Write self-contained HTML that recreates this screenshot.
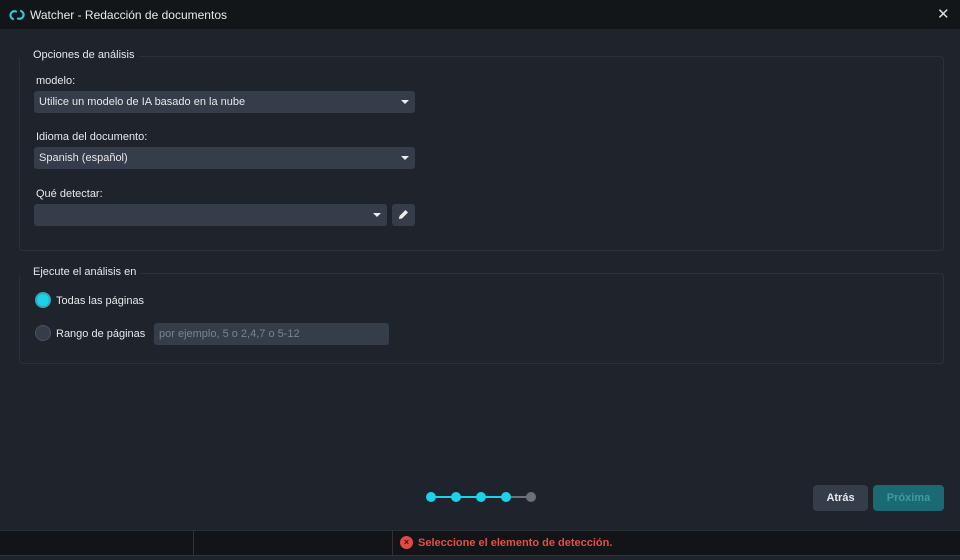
<!DOCTYPE html>
<html><head><meta charset="utf-8"><style>
*{box-sizing:border-box;margin:0;padding:0}
body{width:960px;height:560px;background:#1f232c;font-family:"Liberation Sans",sans-serif;font-size:11px;color:#e6e8ea;position:relative;overflow:hidden}
.abs{position:absolute}
.title{left:0;top:0;width:960px;height:29px;background:#131619}
.grp{border:1px solid #2b313b;border-radius:4px}
.leg{background:#1f232c;padding:0 4px 0 13px;font-size:11px}
.sel{background:#353d4a;border-radius:3px;height:22px;padding:5px 5px;font-size:11px}
.caret{position:absolute;right:6px;top:9px;border-left:4px solid transparent;border-right:4px solid transparent;border-top:4px solid #eee}
.lbl{font-size:11px}
.dot{width:10px;height:10px;border-radius:50%;background:#1ad3ea;top:492px}
.line{height:2px;background:#1ad3ea;top:496px}
</style></head><body>
<div class="abs title"></div>
<svg class="abs" style="left:9px;top:8px" width="16" height="14" viewBox="0 0 16 14"><path d="M7 3.5A4 4 0 1 0 4 11" stroke="#2ec8d8" stroke-width="2.2" fill="none" stroke-linecap="round"/><path d="M9 10.5A4 4 0 1 0 12 3" stroke="#2ec8d8" stroke-width="2.2" fill="none" stroke-linecap="round"/></svg>
<div class="abs" style="left:30px;top:8px;font-size:12px;color:#e8e8e8">Watcher - Redacción de documentos</div>
<div class="abs" style="left:937px;top:5px;font-size:15px;color:#ddd">✕</div>

<div class="abs grp" style="left:19px;top:56px;width:925px;height:195px"></div>
<div class="abs leg" style="left:20px;top:49px">Opciones de análisis</div>
<div class="abs lbl" style="left:36px;top:75px">modelo:</div>
<div class="abs sel" style="left:34px;top:91px;width:381px">Utilice un modelo de IA basado en la nube<span class="caret"></span></div>
<div class="abs lbl" style="left:36px;top:131px">Idioma del documento:</div>
<div class="abs sel" style="left:34px;top:147px;width:381px">Spanish (español)<span class="caret"></span></div>
<div class="abs lbl" style="left:36px;top:188px">Qué detectar:</div>
<div class="abs sel" style="left:34px;top:204px;width:353px"><span class="caret"></span></div>
<div class="abs sel" style="left:392px;top:204px;width:23px"></div>
<svg class="abs" style="left:397px;top:208px" width="13" height="13" viewBox="0 0 13 13"><path d="M2 11l0.5-3 6-6 2.5 2.5-6 6z" fill="#eee"/></svg>

<div class="abs grp" style="left:19px;top:273px;width:925px;height:91px"></div>
<div class="abs leg" style="left:20px;top:266px">Ejecute el análisis en</div>
<div class="abs" style="left:35px;top:292px;width:16px;height:16px;border-radius:50%;background:#1ad3ea;border:2px solid #3aa8b8;box-shadow:inset 0 0 0 2px #1f232c"></div>
<div class="abs" style="left:37px;top:294px;width:12px;height:12px;border-radius:50%;background:#1ad3ea"></div>
<div class="abs lbl" style="left:56px;top:295px">Todas las páginas</div>
<div class="abs" style="left:35px;top:325px;width:16px;height:16px;border-radius:50%;background:#353d4a;border:1px solid #4a5260"></div>
<div class="abs lbl" style="left:56px;top:328px">Rango de páginas</div>
<div class="abs sel" style="left:154px;top:323px;width:235px;color:#7a8290">por ejemplo, 5 o 2,4,7 o 5-12</div>

<div class="abs line" style="left:430px;width:80px"></div>
<div class="abs" style="left:508px;top:496px;width:22px;height:2px;background:#6b7079"></div>
<div class="abs dot" style="left:426px"></div>
<div class="abs dot" style="left:451px"></div>
<div class="abs dot" style="left:476px"></div>
<div class="abs dot" style="left:501px"></div>
<div class="abs dot" style="left:526px;background:#6b7079"></div>

<div class="abs" style="left:813px;top:485px;width:55px;height:26px;background:#353d4a;border-radius:4px;text-align:center;line-height:26px;font-weight:bold">Atrás</div>
<div class="abs" style="left:873px;top:485px;width:71px;height:26px;background:#1b6a73;border-radius:4px;text-align:center;line-height:26px;font-weight:bold;color:#3f9aa3">Próxima</div>

<div class="abs" style="left:0;top:530px;width:960px;height:25px;background:#121417;border-top:1px solid #2a2e35"></div>
<div class="abs" style="left:193px;top:530px;width:1px;height:25px;background:#2e333b"></div>
<div class="abs" style="left:392px;top:530px;width:1px;height:25px;background:#2e333b"></div>
<div class="abs" style="left:0;top:555px;width:960px;height:5px;background:#1f232c;border-top:1px solid #2e333b"></div>
<div class="abs" style="left:400px;top:536px;width:13px;height:13px;border-radius:50%;background:#e04a45;color:#3a1010;font-size:9px;text-align:center;line-height:13px;font-weight:bold">×</div>
<div class="abs" style="left:418px;top:537px;color:#e0504a;font-weight:bold;font-size:11px">Seleccione el elemento de detección.</div>
</body></html>
